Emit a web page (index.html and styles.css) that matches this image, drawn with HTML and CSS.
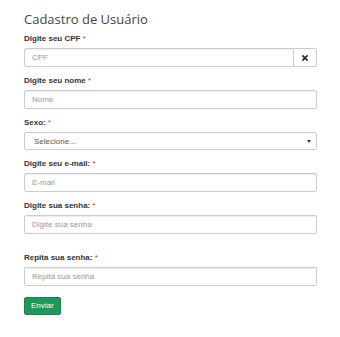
FILE: index.html
```html
<!DOCTYPE html>
<html lang="pt-BR">

<head>
    <meta charset="UTF-8">
    <meta name="viewport" content="width=device-width, initial-scale=1.0">
    <title>Cadastro de Usuário</title>
    <link rel="stylesheet" href="styles.css">
</head>

<body>
    <div class="cadastro">
        <h1 class="titulo">Cadastro de Usuário</h1>
        <form class="form-cadastro">
            <div class="grupo">
                <label class="rotulo">Digite seu CPF <span class="obrigatorio">*</span></label>
                <div class="campo-com-botao">
                    <input class="campo" type="text" placeholder="CPF">
                    <button class="botao-limpar" type="button">
                        <svg width="6" height="6" viewBox="0 0 6 6"><path d="M1 1 L5 5 M5 1 L1 5" stroke="#222" stroke-width="1.7" stroke-linecap="square"/></svg>
                    </button>
                </div>
            </div>
            <div class="grupo">
                <label class="rotulo">Digite seu nome <span class="obrigatorio">*</span></label>
                <input class="campo" type="text" placeholder="Nome">
            </div>
            <div class="grupo">
                <label class="rotulo">Sexo: <span class="obrigatorio">*</span></label>
                <div class="selecao">
                    <span>Selecione...</span>
                    <svg width="4" height="3" viewBox="0 0 4 3"><path d="M0 0 H4 L2 3 Z" fill="#333"/></svg>
                </div>
            </div>
            <div class="grupo">
                <label class="rotulo">Digite seu e-mail: <span class="obrigatorio">*</span></label>
                <input class="campo" type="text" placeholder="E-mail">
            </div>
            <div class="grupo grupo-senha">
                <label class="rotulo">Digite sua senha: <span class="obrigatorio">*</span></label>
                <input class="campo" type="password" placeholder="Digite sua senha">
            </div>
            <div class="grupo grupo-ultimo">
                <label class="rotulo">Repita sua senha: <span class="obrigatorio">*</span></label>
                <input class="campo" type="password" placeholder="Repita sua senha">
            </div>
            <button class="botao-enviar" type="submit">Enviar</button>
        </form>
    </div>
</body>

</html>
```

FILE: styles.css
```css
body {
    margin: 0;
    background: #fff;
    font-family: "Liberation Sans", Arial, sans-serif;
    color: #333;
}

.cadastro {
    width: 293px;
    padding: 10px 0 0 24px;
}

.titulo {
    margin: 0 0 6px;
    font-family: "Open Sans", sans-serif;
    font-size: 13px;
    font-weight: 400;
    line-height: 18px;
    color: #444;
}

.grupo {
    margin-bottom: 9px;
}

.grupo-senha {
    margin-bottom: 19px;
}

.grupo-ultimo {
    margin-bottom: 8px;
}

.rotulo {
    display: block;
    font-size: 8px;
    font-weight: bold;
    line-height: 10px;
    margin-bottom: 4px;
    color: #333;
}

.obrigatorio {
    color: #c9302c;
    font-weight: normal;
}

.campo {
    box-sizing: border-box;
    display: block;
    width: 100%;
    height: 19px;
    margin: 0;
    padding: 0 7px;
    border: 1px solid #ccc;
    border-radius: 2px;
    box-shadow: inset 0 1px 1px rgba(0, 0, 0, .075);
    font-family: "Liberation Sans", Arial, sans-serif;
    font-size: 8px;
    color: #555;
}

.campo::placeholder {
    color: #999;
}

.campo-com-botao {
    display: flex;
}

.campo-com-botao .campo {
    flex: 1;
    border-radius: 2px 0 0 2px;
}

.botao-limpar {
    box-sizing: border-box;
    display: flex;
    align-items: center;
    justify-content: center;
    width: 23px;
    height: 19px;
    padding: 0;
    border: 1px solid #ccc;
    border-left: 0;
    border-radius: 0 2px 2px 0;
    background: #fff;
}

.selecao {
    box-sizing: border-box;
    display: flex;
    align-items: center;
    justify-content: space-between;
    height: 18px;
    padding: 0 5px 0 9px;
    border: 1px solid #ccc;
    border-radius: 2px;
    font-size: 8px;
    color: #555;
}

.botao-enviar {
    height: 18px;
    padding: 0 6px;
    border: 1px solid #18844d;
    border-radius: 2px;
    background: #1d9a5b;
    color: #fff;
    font-family: "Liberation Sans", Arial, sans-serif;
    font-size: 8px;
}
```
